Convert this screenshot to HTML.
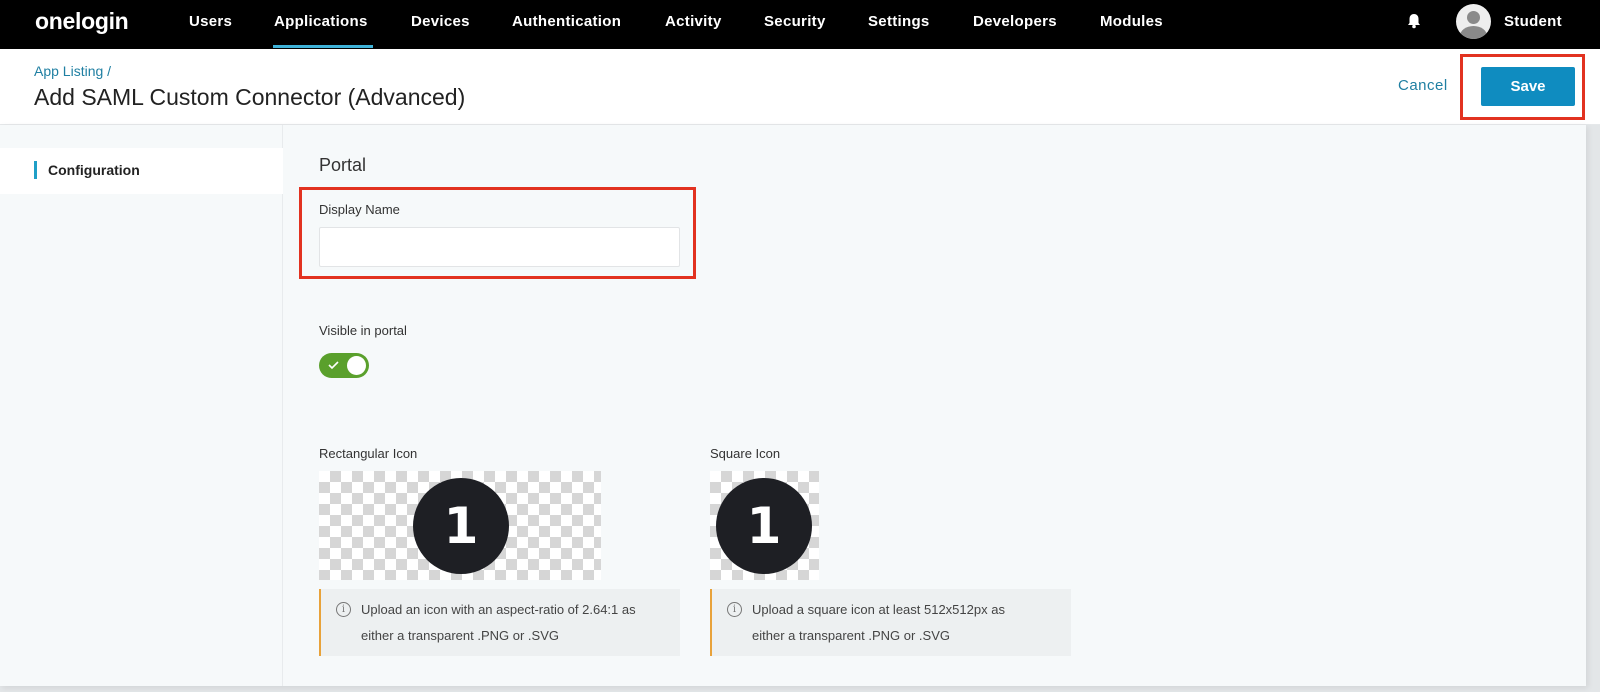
<!DOCTYPE html>
<html><head><meta charset="utf-8"><style>
*{margin:0;padding:0;box-sizing:border-box}
body{width:1600px;height:692px;overflow:hidden;background:#e3e6e8;font-family:"Liberation Sans",Arial,sans-serif;position:relative}
.a{position:absolute}
.nav{left:0;top:0;width:1600px;height:49px;background:#000}
.nav span.i{position:absolute;top:13px;color:#fff;font-size:15px;font-weight:bold;letter-spacing:.3px}
.hdr{left:0;top:49px;width:1600px;height:76px;background:#fff;border-bottom:1px solid #e5e8ea}
.body{left:0;top:125px;width:1586px;height:561px;background:#f6f9fa;box-shadow:2px 2px 6px rgba(0,0,0,.08)}
.side{left:0;top:125px;width:283px;height:561px;border-right:1px solid #e8ebed}
.lbl{color:#333;font-size:13px}
.checker{background-color:#fff;background-image:linear-gradient(45deg,#d6d6d6 25%,transparent 25%,transparent 75%,#d6d6d6 75%),linear-gradient(45deg,#d6d6d6 25%,transparent 25%,transparent 75%,#d6d6d6 75%);background-size:22px 22px;background-position:0 0,11px 11px;overflow:hidden}
.one{position:absolute;width:96px;height:96px;border-radius:50%;background:#1e1f24;color:#fff;font-weight:bold;font-size:50px;text-align:center;line-height:96px;font-family:"DejaVu Sans",sans-serif}
.info{background:#edf0f1;border-left:2px solid #e8a23a;font-size:13px;color:#444;line-height:26px;padding:8px 0 0 40px}
.info i{position:absolute;left:15px;top:13px;width:15px;height:15px;border:1px solid #777;border-radius:50%;font-style:normal;font-size:10px;line-height:13px;text-align:center;color:#777;font-family:"DejaVu Serif",serif}
</style></head><body>
<div class="a nav">
<div class="a" style="left:35px;top:8px;color:#fff;font-size:23px;font-weight:bold;letter-spacing:-.3px">onelogin</div>
<span class="i" style="left:189px">Users</span>
<span class="i" style="left:274px">Applications</span>
<div class="a" style="left:273px;top:45px;width:100px;height:3px;background:#3fb3d9"></div>
<span class="i" style="left:411px">Devices</span>
<span class="i" style="left:512px">Authentication</span>
<span class="i" style="left:665px">Activity</span>
<span class="i" style="left:764px">Security</span>
<span class="i" style="left:868px">Settings</span>
<span class="i" style="left:973px">Developers</span>
<span class="i" style="left:1100px">Modules</span>
<svg class="a" style="left:1407px;top:13px" width="14" height="16" viewBox="0 0 14 16"><path d="M7 1c-3 0-4.5 2.2-4.5 5v4L1 12h12l-1.5-2V6C11.5 3.2 10 1 7 1z" fill="#fff"/><circle cx="7" cy="13.5" r="1.8" fill="#fff"/></svg>
<div class="a" style="left:1456px;top:4px;width:35px;height:35px;border-radius:50%;background:#eee;overflow:hidden"><div class="a" style="left:11px;top:7px;width:13px;height:13px;border-radius:50%;background:#8a8a8a"></div><div class="a" style="left:4px;top:22px;width:27px;height:20px;border-radius:50%;background:#8a8a8a"></div></div>
<span class="i" style="left:1504px">Student</span>
</div>
<div class="a hdr">
<div class="a" style="left:34px;top:14px;color:#1f7fa2;font-size:14px">App Listing /</div>
<div class="a" style="left:34px;top:35px;color:#222;font-size:23px">Add SAML Custom Connector (Advanced)</div>
<div class="a" style="left:1398px;top:28px;color:#1f7fa2;font-size:15px;letter-spacing:.5px">Cancel</div>
<div class="a" style="left:1481px;top:18px;width:94px;height:39px;background:#0f8cc0;border-radius:2px;color:#fff;font-size:15px;font-weight:bold;text-align:center;line-height:39px">Save</div>
<div class="a" style="left:1460px;top:5px;width:125px;height:66px;border:3px solid #e23220"></div>
</div>
<div class="a body"></div>
<div class="a side"></div>
<div class="a" style="left:0;top:148px;width:283px;height:46px;background:#fff"></div>
<div class="a" style="left:34px;top:161px;width:3px;height:18px;background:#1f9fc7"></div>
<div class="a" style="left:48px;top:162px;font-size:14px;font-weight:bold;color:#222">Configuration</div>
<div class="a" style="left:319px;top:155px;font-size:18px;color:#333">Portal</div>
<div class="a lbl" style="left:319px;top:202px">Display Name</div>
<div class="a" style="left:319px;top:227px;width:361px;height:40px;background:#fff;border:1px solid #e2e4e6;border-radius:2px"></div>
<div class="a" style="left:299px;top:187px;width:397px;height:92px;border:3px solid #e23220"></div>
<div class="a lbl" style="left:319px;top:323px">Visible in portal</div>
<div class="a" style="left:319px;top:353px;width:50px;height:25px;border-radius:13px;background:#5aa02c"></div>
<div class="a" style="left:347px;top:356px;width:19px;height:19px;border-radius:50%;background:#fff"></div>
<svg class="a" style="left:328px;top:360px" width="11" height="10" viewBox="0 0 11 10"><path d="M1 5l3 3 6-6" stroke="#fff" stroke-width="1.6" fill="none"/></svg>
<div class="a lbl" style="left:319px;top:446px">Rectangular Icon</div>
<div class="a checker" style="left:319px;top:471px;width:282px;height:109px"><div class="one" style="left:94px;top:7px">1</div></div>
<div class="a info" style="left:319px;top:589px;width:361px;height:67px"><i>i</i>Upload an icon with an aspect-ratio of 2.64:1 as<br>either a transparent .PNG or .SVG</div>
<div class="a lbl" style="left:710px;top:446px">Square Icon</div>
<div class="a checker" style="left:710px;top:471px;width:109px;height:109px"><div class="one" style="left:6px;top:7px">1</div></div>
<div class="a info" style="left:710px;top:589px;width:361px;height:67px"><i>i</i>Upload a square icon at least 512x512px as<br>either a transparent .PNG or .SVG</div>
</body></html>
